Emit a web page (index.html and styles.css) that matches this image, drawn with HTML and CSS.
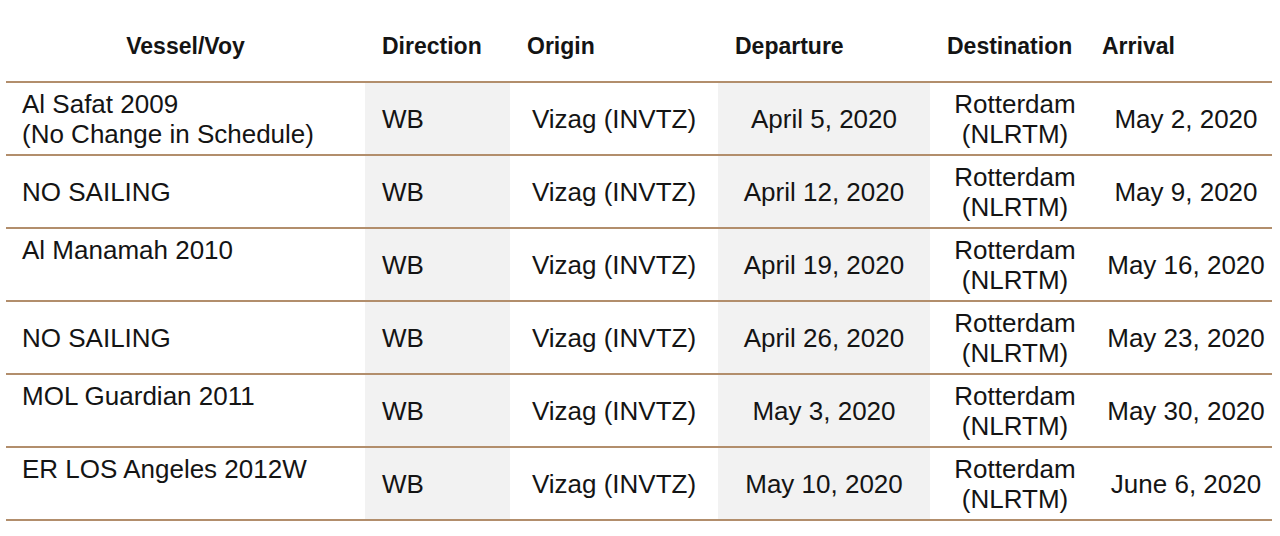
FILE: index.html
```html
<!DOCTYPE html>
<html lang="en">
<head>
<meta charset="utf-8">
<title>Schedule</title>
<link rel="stylesheet" href="styles.css">
</head>
<body>
<table class="schedule">
  <colgroup>
    <col class="c-vessel"><col class="c-dir"><col class="c-origin"><col class="c-dep"><col class="c-dest"><col class="c-arr">
  </colgroup>
  <thead>
    <tr>
      <th class="center">Vessel/Voy</th>
      <th>Direction</th>
      <th>Origin</th>
      <th>Departure</th>
      <th>Destination</th>
      <th class="tight">Arrival</th>
    </tr>
  </thead>
  <tbody>
    <tr>
      <td class="vessel">Al Safat 2009<br>(No Change in Schedule)</td>
      <td class="dir shade">WB</td>
      <td class="mid">Vizag (INVTZ)</td>
      <td class="mid shade">April 5, 2020</td>
      <td class="mid">Rotterdam<br>(NLRTM)</td>
      <td class="mid">May 2, 2020</td>
    </tr>
    <tr>
      <td class="vessel">NO SAILING</td>
      <td class="dir shade">WB</td>
      <td class="mid">Vizag (INVTZ)</td>
      <td class="mid shade">April 12, 2020</td>
      <td class="mid">Rotterdam<br>(NLRTM)</td>
      <td class="mid">May 9, 2020</td>
    </tr>
    <tr>
      <td class="vessel">Al Manamah 2010<br>&nbsp;</td>
      <td class="dir shade">WB</td>
      <td class="mid">Vizag (INVTZ)</td>
      <td class="mid shade">April 19, 2020</td>
      <td class="mid">Rotterdam<br>(NLRTM)</td>
      <td class="mid">May 16, 2020</td>
    </tr>
    <tr>
      <td class="vessel">NO SAILING</td>
      <td class="dir shade">WB</td>
      <td class="mid">Vizag (INVTZ)</td>
      <td class="mid shade">April 26, 2020</td>
      <td class="mid">Rotterdam<br>(NLRTM)</td>
      <td class="mid">May 23, 2020</td>
    </tr>
    <tr>
      <td class="vessel">MOL Guardian 2011<br>&nbsp;</td>
      <td class="dir shade">WB</td>
      <td class="mid">Vizag (INVTZ)</td>
      <td class="mid shade">May 3, 2020</td>
      <td class="mid">Rotterdam<br>(NLRTM)</td>
      <td class="mid">May 30, 2020</td>
    </tr>
    <tr class="last">
      <td class="vessel">ER LOS Angeles 2012W<br>&nbsp;</td>
      <td class="dir shade">WB</td>
      <td class="mid">Vizag (INVTZ)</td>
      <td class="mid shade">May 10, 2020</td>
      <td class="mid">Rotterdam<br>(NLRTM)</td>
      <td class="mid">June 6, 2020</td>
    </tr>
  </tbody>
</table>
</body>
</html>
```

FILE: styles.css
```css
html, body {
  margin: 0;
  padding: 0;
  background: #ffffff;
}

body {
  font-family: "Liberation Sans", Arial, sans-serif;
  color: #141414;
}

.schedule {
  margin-left: 6px;
  width: 1266px;
  border-collapse: collapse;
  table-layout: fixed;
}

.c-vessel { width: 359px; }
.c-dir { width: 145px; }
.c-origin { width: 208px; }
.c-dep { width: 212px; }
.c-dest { width: 170px; }
.c-arr { width: 172px; }

.schedule th {
  font-weight: bold;
  font-size: 23px;
  line-height: 30px;
  text-align: left;
  padding: 31px 0 20px 17px;
  vertical-align: middle;
}

.schedule th.center {
  text-align: center;
  padding-left: 0;
}

.schedule th.tight {
  padding-left: 2px;
}

.schedule td {
  font-size: 26px;
  line-height: 30px;
  padding: 6px 0 5px 0;
  border-top: 2px solid #b28e6c;
  vertical-align: middle;
  height: 60px;
}

.schedule tr.last td {
  border-bottom: 2px solid #b28e6c;
}

.schedule td.vessel {
  padding-left: 16px;
}

.schedule td.dir {
  padding-left: 17px;
}

.schedule td.mid {
  text-align: center;
}

.schedule td.shade {
  background: #f2f2f2;
}
```
